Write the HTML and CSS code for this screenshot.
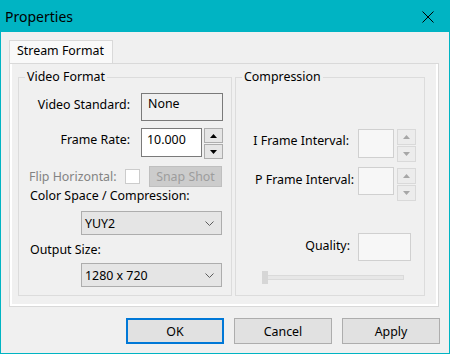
FILE: index.html
```html
<!DOCTYPE html>
<html>
<head>
<meta charset="utf-8">
<title>Properties</title>
<link rel="stylesheet" href="styles.css">
</head>
<body>
<div class="window">
  <div class="titlebar">
    <span class="title">Properties</span>
    <svg class="close" width="12" height="12" viewBox="0 0 12 12"><path d="M0.5 0.5L11.5 11.5M11.5 0.5L0.5 11.5" stroke="#000" stroke-width="1" fill="none"/></svg>
  </div>
  <div class="body">
    <div class="tabs"><div class="tab">Stream Format</div></div>
    <div class="panel">
      <div class="group group-video">
        <div class="group-title">Video Format</div>
        <div class="row row-std">
          <span class="label lbl-std">Video Standard:</span>
          <div class="field field-ro">None</div>
        </div>
        <div class="row row-rate">
          <span class="label lbl-rate">Frame Rate:</span>
          <div class="field field-edit">10.000</div>
          <div class="spin">
            <div class="spin-btn"><svg width="7" height="4" viewBox="0 0 7 4"><path d="M3.5 0L7 4H0Z" fill="#000"/></svg></div>
            <div class="spin-btn"><svg width="7" height="4" viewBox="0 0 7 4"><path d="M0 0H7L3.5 4Z" fill="#000"/></svg></div>
          </div>
        </div>
        <div class="row row-flip">
          <span class="label lbl-flip">Flip Horizontal:</span>
          <span class="checkbox"></span>
          <div class="btn-snap">Snap Shot</div>
        </div>
        <div class="text-label">Color Space / Compression:</div>
        <div class="combo combo-first"><span>YUY2</span><svg width="9" height="5" viewBox="0 0 9 5"><path d="M0.5 0.5L4.5 4.5L8.5 0.5" stroke="#5c5c5c" fill="none"/></svg></div>
        <div class="text-label text-output">Output Size:</div>
        <div class="combo combo-second"><span>1280 x 720</span><svg width="9" height="5" viewBox="0 0 9 5"><path d="M0.5 0.5L4.5 4.5L8.5 0.5" stroke="#5c5c5c" fill="none"/></svg></div>
      </div>
      <div class="group group-comp">
        <div class="group-title">Compression</div>
        <div class="row row-iframe">
          <span class="label lbl-i">I Frame Interval:</span>
          <div class="field field-dis field-i"></div>
          <div class="spin spin-dis">
            <div class="spin-btn"><svg width="7" height="4" viewBox="0 0 7 4"><path d="M3.5 0L7 4H0Z" fill="#a6a6a6"/></svg></div>
            <div class="spin-btn"><svg width="7" height="4" viewBox="0 0 7 4"><path d="M0 0H7L3.5 4Z" fill="#a6a6a6"/></svg></div>
          </div>
        </div>
        <div class="row row-pframe">
          <span class="label lbl-p">P Frame Interval:</span>
          <div class="field field-dis field-p"></div>
          <div class="spin spin-dis spin-p">
            <div class="spin-btn"><svg width="7" height="4" viewBox="0 0 7 4"><path d="M3.5 0L7 4H0Z" fill="#a6a6a6"/></svg></div>
            <div class="spin-btn"><svg width="7" height="4" viewBox="0 0 7 4"><path d="M0 0H7L3.5 4Z" fill="#a6a6a6"/></svg></div>
          </div>
        </div>
        <div class="row row-quality">
          <span class="label lbl-q">Quality:</span>
          <div class="field field-dis field-q"></div>
        </div>
        <div class="slider">
          <div class="slider-track"></div>
          <div class="slider-thumb"></div>
        </div>
      </div>
    </div>
    <div class="buttons">
      <div class="btn btn-default">OK</div>
      <div class="btn">Cancel</div>
      <div class="btn">Apply</div>
    </div>
  </div>
</div>
</body>
</html>
```
FILE: styles.css
```css
* { box-sizing: border-box; }
html, body { margin: 0; padding: 0; }
body {
  font-family: "Noto Sans", "DejaVu Sans", sans-serif;
  font-size: 12.4px;
  color: #000;
  background: #f0f0f0;
}
.window {
  width: 450px;
  height: 354px;
  border: 1px solid #00b4c3;
  background: #f0f0f0;
  display: flex;
  flex-direction: column;
}
.titlebar {
  flex: none;
  height: 31px;
  background: #00b4c3;
  display: flex;
  align-items: center;
  justify-content: space-between;
  padding: 0 15px 0 4px;
}
.title { font-size: 14px; line-height: 20px; padding-top: 1px; }
.close { display: block; }

.body {
  display: flex;
  flex-direction: column;
  padding: 8px 10px 0 8px;
}
.tabs { display: flex; height: 23px; }
.tab {
  width: 104px;
  border: 1px solid #d9d9d9;
  border-bottom: none;
  background: #f9f9f9;
  padding: 2px 0 0 7px;
  line-height: 16px;
}
.panel {
  height: 244px;
  border: 1px solid #d9d9d9;
  box-shadow: inset 2px 0 #fff, inset -2px 0 #fff, inset 0 -2px #fff;
  padding: 13px 13px 10px 8px;
  display: flex;
  gap: 3px;
}
.group {
  border: 1px solid #dcdcdc;
  height: 219px;
  display: flex;
  flex-direction: column;
  align-items: flex-start;
}
.group-video { width: 214px; }
.group-comp { width: 190px; }
.group-title {
  margin: -9px 0 0 6px;
  padding: 0 2px;
  line-height: 16px;
  background: #f0f0f0;
}
.row { display: flex; align-items: flex-start; }
.label { line-height: 16px; text-align: right; white-space: nowrap; flex: none; }
.field { flex: none; line-height: 16px; }

/* left group */
.row-std { margin-top: 8px; height: 28px; }
.lbl-std { width: 111px; padding-top: 4px; }
.field-ro {
  margin-left: 11px;
  width: 82px;
  height: 28px;
  border: 1px solid #7a7a7a;
  background: #f0f0f0;
  padding: 2px 0 0 6px;
}
.row-rate { margin-top: 7px; height: 31px; }
.lbl-rate { width: 111px; padding-top: 4px; }
.field-edit {
  margin-left: 11px;
  width: 61px;
  height: 29px;
  border: 1px solid #7a7a7a;
  background: #fff;
  padding: 3px 0 0 5px;
}
.spin {
  flex: none;
  margin-left: 2px;
  width: 19px;
  display: flex;
  flex-direction: column;
  gap: 1px;
}
.spin-btn {
  height: 15px;
  border: 1px solid #adadad;
  background: #e5e5e5;
  display: flex;
  align-items: center;
  justify-content: center;
}
.spin-btn svg { display: block; }
.spin-dis .spin-btn { border-color: #d9d9d9; background: #ececec; height: 16px; }
.spin-dis { margin-left: 3px; }

.row-flip { margin-top: 7px; height: 21px; }
.lbl-flip { width: 106px; text-align: left; padding: 3px 0 0 10px; color: #838383; }
.checkbox {
  flex: none;
  margin-top: 3px;
  width: 15px;
  height: 15px;
  border: 1px solid #cccccc;
  background: #fff;
}
.btn-snap {
  margin-left: 9px;
  width: 73px;
  height: 21px;
  border: 1px solid #bfbfbf;
  background: #cccccc;
  color: #9d9d9d;
  display: flex;
  align-items: center;
  justify-content: center;
}
.text-label { line-height: 16px; padding-left: 11px; margin-top: 1px; }
.text-output { margin-top: 7px; }
.combo {
  margin-left: 62px;
  width: 141px;
  height: 24px;
  border: 1px solid #adadad;
  background: #e5e5e5;
  display: flex;
  align-items: center;
  justify-content: space-between;
  padding: 0 7px 0 3px;
}
.combo svg { display: block; }
.combo-first { margin-top: 7px; }
.combo-second { margin-top: 5px; }

/* right group */
.field-dis {
  border: 1px solid #d0d0d0;
  background: #f7f7f7;
}
.row-iframe { margin-top: 44px; height: 32px; }
.lbl-i { width: 113px; padding-top: 4px; }
.field-i { margin-left: 9px; width: 36px; height: 29px; }
.row-pframe { margin-top: 6px; height: 34px; }
.lbl-p { width: 118px; padding-top: 5px; }
.field-p { margin-left: 4px; width: 36px; height: 28px; }
.spin-p { margin-top: 1px; }
.row-quality { margin-top: 32px; height: 28px; }
.lbl-q { width: 114px; padding-top: 5px; }
.field-q { margin-left: 8px; width: 53px; height: 28px; }
.slider {
  margin: 10px 0 0 26px;
  width: 142px;
  height: 13px;
  display: flex;
  align-items: center;
}
.slider-track {
  width: 142px;
  height: 5px;
  border: 1px solid #dadada;
  background: #e7e7e7;
}
.slider-thumb {
  margin-left: -142px;
  width: 6px;
  height: 13px;
  background: #d6d6d6;
}

/* buttons */
.buttons {
  display: flex;
  justify-content: flex-end;
  gap: 10px;
  margin: 11px -1px 0 0;
}
.btn {
  width: 98px;
  height: 26px;
  border: 1px solid #adadad;
  background: #e1e1e1;
  display: flex;
  align-items: center;
  justify-content: center;
}
.btn-default { border: 2px solid #0078d7; }
```
